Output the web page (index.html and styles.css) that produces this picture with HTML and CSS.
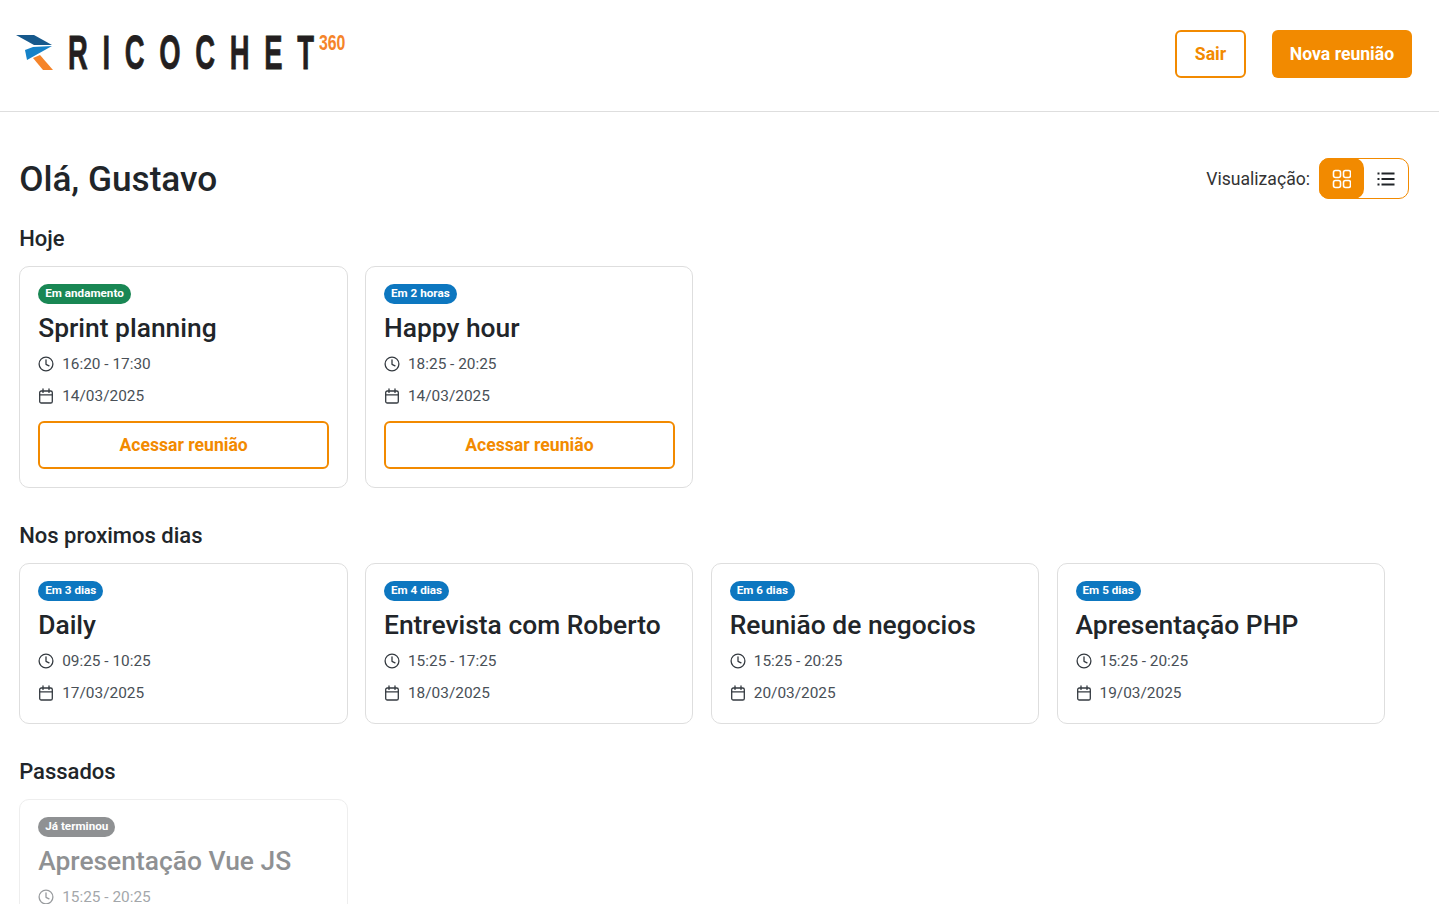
FILE: index.html
```html
<!DOCTYPE html>
<html lang="pt-BR">
<head>
  <meta charset="UTF-8" />
  <meta name="viewport" content="width=device-width, initial-scale=1.0"/>
  <title>Ricochet360 - Reuniões</title>
  <link rel="stylesheet" href="styles.css">
</head>
<body>

<svg class="defs" width="0" height="0" aria-hidden="true">
  <symbol id="icon-clock" viewBox="0 0 16 16">
    <circle cx="8" cy="8" r="6.9" fill="none" stroke="currentColor" stroke-width="1.3"/>
    <path d="M8 3.8V8.3L11 9.8" fill="none" stroke="currentColor" stroke-width="1.3" stroke-linecap="round" stroke-linejoin="round"/>
  </symbol>
  <symbol id="icon-calendar" viewBox="0 0 16 16">
    <rect x="1.7" y="3" width="12.6" height="12" rx="1.6" fill="none" stroke="currentColor" stroke-width="1.3"/>
    <path d="M1.7 6.8H14.3M5 1V4.4M11 1V4.4" fill="none" stroke="currentColor" stroke-width="1.3" stroke-linecap="round"/>
  </symbol>
</svg>

<header class="topbar">
  <div class="logo">
    <svg class="logo-mark" width="38" height="37" viewBox="0 0 38 37">
      <polygon points="0,1 18,1 36,11 18,11" fill="#17598c"/>
      <polygon points="36,12 11,26 9,16 17,13" fill="#1582c8"/>
      <polygon points="17,24 24,21 37,36 27,36" fill="#f5842a"/>
    </svg>
    <div class="logo-box"><span class="logo-word">RICOCHE<span class="logo-last">T</span></span></div>
    <span class="logo-360">360</span>
  </div>
  <div class="topbar-actions">
    <button class="btn btn-outline">Sair</button>
    <button class="btn btn-solid">Nova reunião</button>
  </div>
</header>

<main class="content">
  <div class="greeting-row">
    <h1>Olá, Gustavo</h1>
    <div class="view-switch">
      <span>Visualização:</span>
      <div class="view-toggle">
        <button class="toggle-btn active" aria-label="Grade">
          <svg width="20" height="20" viewBox="0 0 20 20" fill="none" stroke="currentColor" stroke-width="1.6">
            <rect x="2.5" y="1.5" width="7" height="7" rx="2"/>
            <rect x="12.5" y="1.5" width="7" height="7" rx="2"/>
            <rect x="2.5" y="11.5" width="7" height="7" rx="2"/>
            <rect x="12.5" y="11.5" width="7" height="7" rx="2"/>
          </svg>
        </button>
        <button class="toggle-btn" aria-label="Lista">
          <svg width="20" height="20" viewBox="0 0 20 20" fill="none" stroke="currentColor" stroke-width="2">
            <path d="M5.5 4.5H18.5M5.5 10H18.5M5.5 15.5H18.5"/>
            <path d="M1.5 4.5H3.5M1.5 10H3.5M1.5 15.5H3.5"/>
          </svg>
        </button>
      </div>
    </div>
  </div>

  <section class="group">
    <h2>Hoje</h2>
    <div class="cards">
      <article class="card">
        <span class="pill pill-green">Em andamento</span>
        <h3>Sprint planning</h3>
        <p class="meta"><svg class="ico"><use href="#icon-clock"/></svg>16:20 - 17:30</p>
        <p class="meta"><svg class="ico"><use href="#icon-calendar"/></svg>14/03/2025</p>
        <button class="btn btn-outline btn-wide">Acessar reunião</button>
      </article>
      <article class="card">
        <span class="pill pill-blue">Em 2 horas</span>
        <h3>Happy hour</h3>
        <p class="meta"><svg class="ico"><use href="#icon-clock"/></svg>18:25 - 20:25</p>
        <p class="meta"><svg class="ico"><use href="#icon-calendar"/></svg>14/03/2025</p>
        <button class="btn btn-outline btn-wide">Acessar reunião</button>
      </article>
    </div>
  </section>

  <section class="group">
    <h2>Nos proximos dias</h2>
    <div class="cards">
      <article class="card">
        <span class="pill pill-blue">Em 3 dias</span>
        <h3>Daily</h3>
        <p class="meta"><svg class="ico"><use href="#icon-clock"/></svg>09:25 - 10:25</p>
        <p class="meta"><svg class="ico"><use href="#icon-calendar"/></svg>17/03/2025</p>
      </article>
      <article class="card">
        <span class="pill pill-blue">Em 4 dias</span>
        <h3>Entrevista com Roberto</h3>
        <p class="meta"><svg class="ico"><use href="#icon-clock"/></svg>15:25 - 17:25</p>
        <p class="meta"><svg class="ico"><use href="#icon-calendar"/></svg>18/03/2025</p>
      </article>
      <article class="card">
        <span class="pill pill-blue">Em 6 dias</span>
        <h3>Reunião de negocios</h3>
        <p class="meta"><svg class="ico"><use href="#icon-clock"/></svg>15:25 - 20:25</p>
        <p class="meta"><svg class="ico"><use href="#icon-calendar"/></svg>20/03/2025</p>
      </article>
      <article class="card">
        <span class="pill pill-blue">Em 5 dias</span>
        <h3>Apresentação PHP</h3>
        <p class="meta"><svg class="ico"><use href="#icon-clock"/></svg>15:25 - 20:25</p>
        <p class="meta"><svg class="ico"><use href="#icon-calendar"/></svg>19/03/2025</p>
      </article>
    </div>
  </section>

  <section class="group">
    <h2>Passados</h2>
    <div class="cards">
      <article class="card card-past">
        <span class="pill pill-gray">Já terminou</span>
        <h3>Apresentação Vue JS</h3>
        <p class="meta"><svg class="ico"><use href="#icon-clock"/></svg>15:25 - 20:25</p>
      </article>
    </div>
  </section>
</main>

</body>
</html>
```

FILE: styles.css
```css
* {
  box-sizing: border-box;
}

html, body {
  height: 100%;
  overflow: hidden;
}

body {
  margin: 0;
  font-family: Roboto, Arial, sans-serif;
  color: #212529;
  background-color: #fff;
}

.defs {
  display: block;
  height: 0;
}

.topbar {
  display: flex;
  align-items: center;
  justify-content: space-between;
  height: 112px;
  padding: 0 27px 4px 16px;
  border-bottom: 1px solid #dedede;
}

.logo {
  display: flex;
  align-items: flex-start;
  height: 37px;
  margin-top: -3px;
}

.logo-box {
  flex: 0 0 251px;
  width: 251px;
  min-width: 0;
  margin-left: 14px;
}

.logo-word {
  display: inline-block;
  font-family: "Liberation Sans", Arial, sans-serif;
  font-size: 49px;
  line-height: 37px;
  font-weight: bold;
  letter-spacing: 26.2px;
  white-space: nowrap;
  color: #231f20;
  -webkit-text-stroke: 0.8px #231f20;
  transform: scaleX(0.56);
  transform-origin: left center;
}

.logo-last {
  letter-spacing: 0;
}

.logo-360 {
  display: block;
  font-family: "Liberation Sans", Arial, sans-serif;
  font-size: 22px;
  line-height: 18px;
  font-weight: bold;
  color: #f5842a;
  transform: scaleX(0.72);
  transform-origin: left center;
}

.topbar-actions {
  display: flex;
  gap: 26px;
}

.btn {
  height: 48px;
  border-radius: 6px;
  font-family: inherit;
  font-size: 17.6px;
  font-weight: 700;
  cursor: pointer;
}

.btn-outline {
  width: 71px;
  background-color: #fff;
  color: #f28a00;
  border: 2px solid #f28a00;
}

.btn-solid {
  width: 140px;
  background-color: #f28a00;
  color: #fff;
  border: none;
}

.btn-wide {
  display: block;
  width: 100%;
  margin: 9px 0 4px;
}

.content {
  padding: 47px 29px 0 19.2px;
}

.greeting-row {
  display: flex;
  align-items: center;
  justify-content: space-between;
  height: 40px;
}

h1 {
  margin: 0;
  font-size: 35.2px;
  font-weight: 500;
  line-height: 40px;
}

.view-switch {
  display: flex;
  align-items: center;
  gap: 9px;
  margin: -1px 1px 0 0;
  font-size: 17.6px;
  color: #333;
}

.view-toggle {
  display: flex;
  width: 90px;
  height: 41px;
  border: 1px solid #f28a00;
  border-radius: 10px;
}

.toggle-btn {
  display: flex;
  align-items: center;
  justify-content: center;
  flex: 1;
  padding: 0;
  border: none;
  background: none;
  color: #212529;
  cursor: pointer;
}

.toggle-btn.active {
  margin: -1px 0 -1px -1px;
  background-color: #f28a00;
  border-radius: 10px;
  color: #fff;
}

.group {
  margin-top: 35px;
}

.greeting-row + .group {
  margin-top: 27px;
}

h2 {
  margin: 0 0 14px;
  font-size: 22px;
  font-weight: 500;
  line-height: 26px;
}

.cards {
  display: flex;
  gap: 17.4px;
}

.card {
  flex: 0 0 328.4px;
  padding: 17px 17.5px 14px 18px;
  background-color: #fff;
  border: 1px solid #dedede;
  border-radius: 10px;
}

.card-past {
  opacity: 0.5;
}

.pill {
  display: inline-block;
  height: 20px;
  padding: 0 7px;
  border-radius: 10px;
  font-size: 11.7px;
  font-weight: 700;
  line-height: 19px;
  color: #fff;
  vertical-align: top;
}

.pill-green {
  background-color: #198754;
}

.pill-blue {
  background-color: #0d77c0;
}

.pill-gray {
  background-color: #212529;
}

h3 {
  margin: 7px 0 0;
  font-size: 26.4px;
  font-weight: 500;
  line-height: 34px;
}

.meta {
  display: flex;
  align-items: center;
  gap: 8px;
  height: 32px;
  margin: 0;
  font-size: 15.4px;
  color: #495057;
}

h3 + .meta {
  margin-top: 3px;
}

.ico {
  width: 16px;
  height: 16px;
  color: #343a40;
}
```
